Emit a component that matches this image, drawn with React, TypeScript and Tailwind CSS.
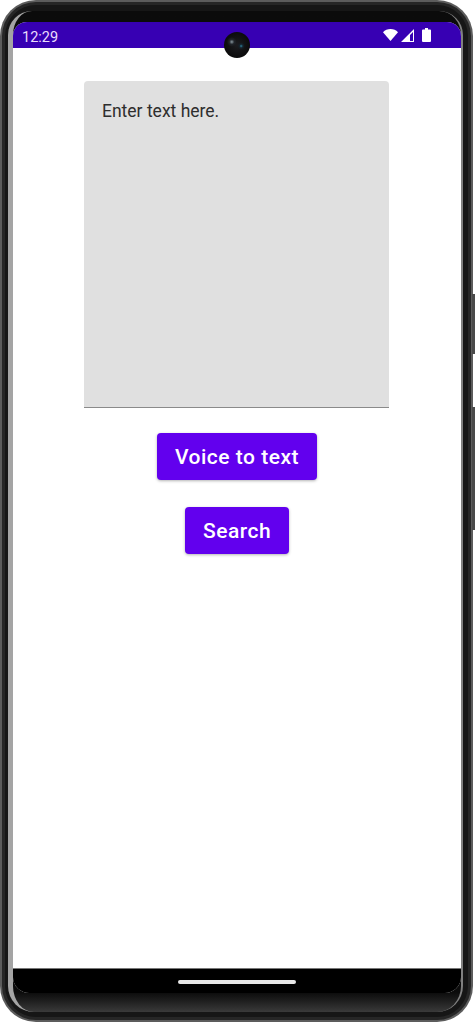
export default function App() {
  return (
    <div className="relative h-[1024px] w-[475px] overflow-hidden bg-white font-['Roboto',sans-serif]">
      {/* side buttons */}
      <div className="absolute right-0 top-[294px] h-[60px] w-[3px] bg-[#4a4a4a]" />
      <div className="absolute right-0 top-[407px] h-[123px] w-[3px] bg-[#4a4a4a]" />

      {/* phone frame */}
      <div className="h-[1022px] w-[473px] rounded-[36px] bg-[#5c5c5c] p-[2px]">
        <div className="h-full w-full rounded-[34px] bg-[#262626] p-[3px]">
          <div className="h-full w-full rounded-[31px] bg-[#161616] pb-[5px] pl-[3px] pr-[5px] pt-[6px]">
            <div className="h-full w-full rounded-b-[26px] rounded-t-[24px] border-l-[5px] border-r-[2px] border-l-[#a4a4a4] border-r-[#808080] bg-gradient-to-b from-[#0b0b0b] from-[98%] to-[#3a3a3a] pb-[19px] pt-[11px]">
              <div className="flex h-full flex-col overflow-hidden rounded-b-[16px] rounded-t-[14px] bg-white">
                <div className="flex h-[26px] shrink-0 items-center justify-between bg-[#3700b3] pl-[9px] pr-[30px] text-[14.5px] text-[#eadcfb]">
                  <span className="pt-[5px]">12:29</span>
                  <div className="flex items-center gap-[8px]">
                    <div className="flex items-center gap-[3px]">
                      <svg width="15" height="12" viewBox="0 0 15 12" fill="white">
                        <path d="M0 3.200C2 1.200 4.500 0 7.500 0s5.500 1.200 7.500 3.200L7.500 12z" />
                      </svg>
                      <svg width="13" height="13" viewBox="0 0 13 13" fill="white">
                        <path fillRule="evenodd" d="M13 0v13H0zM12 3 9 6v6h3z" />
                      </svg>
                    </div>
                    <svg width="9" height="14" viewBox="0 0 9 14" fill="white">
                      <path d="M3 0h3v1.500h2a1 1 0 0 1 1 1V13a1 1 0 0 1-1 1H1a1 1 0 0 1-1-1V2.500a1 1 0 0 1 1-1h2z" />
                    </svg>
                  </div>
                </div>

                <div className="flex flex-1 flex-col items-center pt-[33px]">
                  <div className="mr-[1px] h-[327px] w-[305px] rounded-t-[4px] border-b border-[#8a8a8a] bg-[#e0e0e0] px-[18px] pt-[20px] text-[17.500px] leading-[20px] text-[#2e2e2e]">
                    Enter text here.
                  </div>
                  <button className="mt-[25px] h-[47px] w-[160px] rounded-[4px] bg-[#6200ee] pt-[3px] text-[21px] font-medium tracking-[0.5px] text-white shadow-[0_1px_3px_rgba(0,0,0,0.3)]">
                    Voice to text
                  </button>
                  <button className="mt-[27px] h-[47px] w-[104px] rounded-[4px] bg-[#6200ee] pt-[3px] text-[21px] font-medium tracking-[0.5px] text-white shadow-[0_1px_3px_rgba(0,0,0,0.3)]">
                    Search
                  </button>
                </div>

                <div className="flex h-[25px] shrink-0 items-start justify-center border-t border-[#777] bg-black pt-[11px]">
                  <div className="h-[4px] w-[118px] rounded-full bg-[#e8e8e8]" />
                </div>
              </div>
            </div>
          </div>
        </div>
      </div>

      {/* front camera */}
      <div className="absolute left-[224px] top-[32px] h-[26px] w-[26px] rounded-full bg-[radial-gradient(circle_at_30%_38%,#8a98a0_0,#20242a_10%,transparent_20%),radial-gradient(circle_at_66%_54%,#2f7f9a_0,#14232c_8%,transparent_16%),radial-gradient(circle_at_50%_50%,#1c1c20_0,#0a0a0a_75%,#000_100%)]" />
    </div>
  );
}
